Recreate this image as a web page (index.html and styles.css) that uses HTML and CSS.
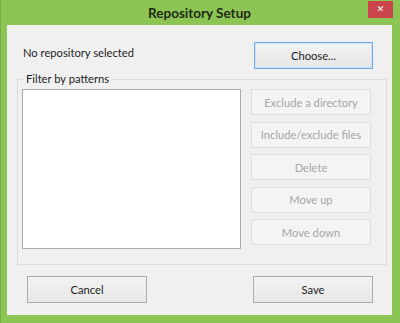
FILE: index.html
```html
<!DOCTYPE html>
<html>
<head>
<meta charset="UTF-8" />
<title>Repository Setup</title>
<link rel="stylesheet" href="styles.css">
</head>
<body>
<div class="window">
  <div class="titlebar">
    <span></span>
    <div class="ttl">Repository Setup</div>
    <div class="cls">&#x2715;</div>
  </div>

  <div class="content">
    <div class="repo">
      <span class="repo-lbl">No repository selected</span>
      <button class="btn dflt">Choose...</button>
    </div>

    <fieldset class="filters">
      <legend>Filter by patterns</legend>
      <div class="list"></div>
      <div class="actions">
        <button class="btn" disabled>Exclude a directory</button>
        <button class="btn" disabled>Include/exclude files</button>
        <button class="btn" disabled>Delete</button>
        <button class="btn" disabled>Move up</button>
        <button class="btn" disabled>Move down</button>
      </div>
    </fieldset>

    <div class="footer">
      <button class="btn">Cancel</button>
      <button class="btn">Save</button>
    </div>
  </div>
</div>
</body>
</html>
```

FILE: styles.css
```css
* {
  box-sizing: border-box;
}

body {
  margin: 0;
  font-family: Lato, "Noto Sans", sans-serif;
  font-size: 11.2px;
  color: #1e1e1e;
}

div.window {
  width: 400px;
  height: 323px;
  background: #8dc554;
  border-left: 1px solid #76b043;
  padding: 0 8px 8px 6px;
  display: flex;
  flex-direction: column;
}

div.titlebar {
  height: 25px;
  display: grid;
  grid-template-columns: 1fr auto 1fr;
}

div.titlebar div.ttl {
  font-weight: bold;
  font-size: 13.5px;
  line-height: 26px;
  color: #1f2a16;
}

div.titlebar div.cls {
  justify-self: end;
  width: 25px;
  height: 17px;
  margin-top: 1px;
  margin-right: -1px;
  background: #c9444b;
  color: #fff;
  font-family: "DejaVu Sans", sans-serif;
  font-size: 9px;
  font-weight: bold;
  line-height: 17px;
  text-align: center;
}

div.content {
  flex: 1;
  background: #f0f0f0;
  display: flex;
  flex-direction: column;
  padding: 17px 19px 12px 10px;
}

div.repo {
  display: flex;
  justify-content: space-between;
  align-items: center;
  padding-left: 6px;
}

div.repo span.repo-lbl {
  margin-top: -6px;
}

button.btn {
  font-family: inherit;
  font-size: 11.2px;
  color: #1e1e1e;
  width: 119px;
  height: 27px;
  border: 1px solid #adadad;
  background: linear-gradient(#f3f3f3, #e6e6e6);
  padding: 0;
}

button.dflt {
  border-color: #6fa9e6;
  box-shadow: inset 0 0 0 1px #cfe3f8;
}

button.btn:disabled {
  color: #a6a6a6;
  border-color: #dedede;
  background: #f4f4f4;
  height: 26px;
}

fieldset.filters {
  margin: 2px -14px 0 0;
  border: 1px solid #dcdcdc;
  padding: 2px 15px 15px 4px;
  display: flex;
  gap: 10px;
}

fieldset.filters legend {
  padding: 0 2px;
  margin-left: 2px;
  line-height: 16px;
}

div.list {
  width: 219px;
  height: 160px;
  background: #fff;
  border: 1px solid #ababab;
}

div.actions {
  display: flex;
  flex-direction: column;
  gap: 6.5px;
  width: 120px;
}

div.actions button.btn {
  width: 120px;
}

div.footer {
  margin-top: auto;
  display: flex;
  justify-content: space-between;
  padding-left: 10px;
}

div.footer button.btn {
  width: 120px;
}
```
